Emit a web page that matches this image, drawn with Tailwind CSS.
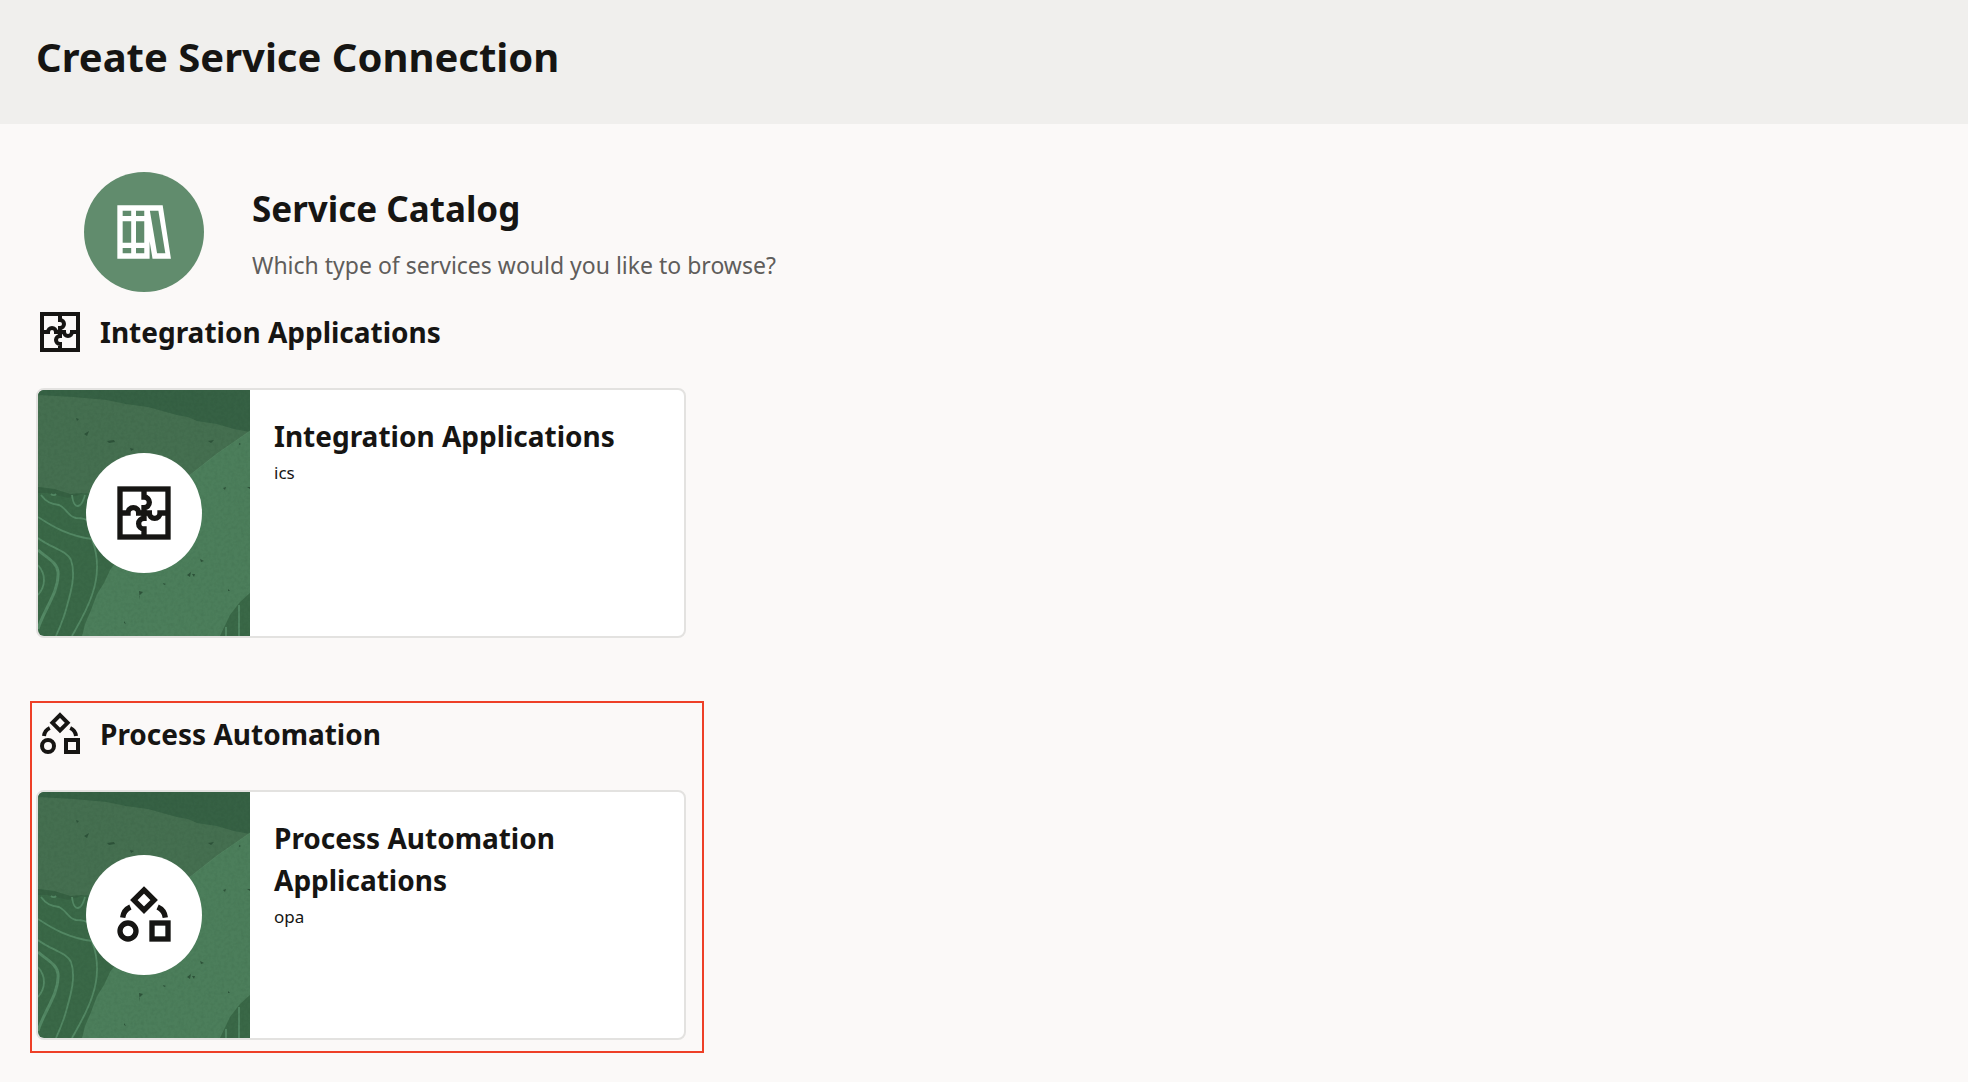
<!DOCTYPE html>
<html lang="en">
<head>
    <meta charset="UTF-8">
    <meta name="viewport" content="width=device-width, initial-scale=1.0">
    <title>Create Service Connection</title>
    <script src="https://cdn.jsdelivr.net/npm/@tailwindcss/browser@4"></script>
</head>
<body class="min-h-screen bg-[#fbf9f8] font-['Noto_Sans',sans-serif] text-[#161513]">
    <!-- Shared icons and card artwork -->
    <svg class="hidden" aria-hidden="true">
        <symbol id="icon-puzzle" viewBox="0 0 24 24">
            <g fill="none" stroke="currentColor" stroke-width="2">
                <rect x="3" y="3" width="18" height="18"/>
                <path d="M12 3V6A2 2 0 0 1 12 10V12M21 12H18A2 2 0 0 1 14 12H12M12 21V18A2 2 0 0 1 12 14V12M3 12H6A2 2 0 0 1 10 12H12"/>
                <path d="M11 12H13"/>
            </g>
        </symbol>
        <symbol id="icon-process" viewBox="0 0 24 24">
            <g fill="none" stroke="currentColor" stroke-width="2">
                <path d="M12 2.6L15.8 6.4L12 10.2L8.2 6.4Z"/>
                <circle cx="6" cy="18" r="3"/>
                <rect x="15" y="15" width="6" height="6"/>
                <path d="M4 13A5 5 0 0 1 6.9 9M20 13A5 5 0 0 0 17.1 9"/>
            </g>
        </symbol>
        <symbol id="icon-books" viewBox="0 0 24 24">
            <path fill="currentColor" fill-rule="evenodd" d="M2 2H19L22.1 22H15.2L14.1 15.5V22H2ZM4 4V6H7.2V4ZM9 4V6H12.1V4ZM4 8V16H7.2V8ZM9 8V16H12.1V8ZM4 18V20H7.2V18ZM9 18V20H12.1V18ZM14.2 4L16.9 20H20L17.4 4Z"/>
        </symbol>
        <filter id="grain" x="0" y="0" width="100%" height="100%">
            <feTurbulence type="fractalNoise" baseFrequency="0.3" numOctaves="2" seed="4"/>
            <feColorMatrix values="0 0 0 0 0.1  0 0 0 0 0.22  0 0 0 0 0.14  0.9 0 0 0 -0.38"/>
        </filter>
        <symbol id="card-art" viewBox="0 0 212 246" preserveAspectRatio="xMidYMid slice">
            <rect width="212" height="246" fill="#3a6847"/>
            <path fill="#366144" d="M0 0H212V50H0Z"/>
            <path fill="#456f50" d="M0 5L36 7L69 10L88 14L110 17L139 25L150 27L159 31L179 34L196 39L212 42V110H60L49 103L32 104L16 99L0 97Z"/>
            <path fill="#4c7e5b" d="M212 41L180 63L152 85L110 130L72 180L66 193L59 204L53 220L47 234L44 246H182L192 225L202 212L212 203Z"/>
            <path fill="none" stroke="#5c8d69" stroke-width="1" opacity=".5" d="M212 41L180 63L152 85"/>
            <path fill="#335c40" opacity=".6" d="M0 97L16 99L32 104L46 103L30 108L10 103L0 103Z"/>
            <g fill="none" stroke="#538864" stroke-width="1.8">
                <path d="M3 105C8 112 13 114 21 115C28 118 31 127 38 128C45 128 48 129 54 133"/>
                <path d="M0 127C15 137 31 146 54 149C61 168 60 188 54 205C49 220 43 230 34 246"/>
                <path d="M0 148C13 158 28 160 33 170C38 184 33 202 29 216C26 228 22 237 18 246"/>
                <path stroke-width="3" d="M0 160C9 168 19 172 20 182C21 195 14 208 9 218C5 226 2 232 0 239"/>
                <path d="M0 175C8 184 8 196 0 205"/>
                <path d="M34 105C35 114 38 118 42 115C45 113 46 108 47 105"/>
                <path d="M13 104C15 106 17 105 18 104M201 215V246M188 237V246"/>
            </g>
            <rect width="212" height="246" filter="url(#grain)" opacity=".2"/>
            <g fill="#2d5239">
                <path d="M46 44L51 41L49 46ZM69 51L76 50L77 52L71 53ZM170 51L176 50L173 53ZM38 28L41 29L39 31ZM92 58L96 59L93 61ZM162 169L166 171L163 172ZM149 185L153 182L152 187ZM154 184L157 184L156 187ZM101 201L105 202L101 206L102 210ZM185 98L188 97L187 100ZM209 97H212V99ZM125 193L128 194L126 195ZM86 231L88 234L86 233ZM190 199L192 201L190 201ZM201 53L203 54L201 55Z"/>
            </g>
        </symbol>
    </svg>

    <header class="bg-[#f0efed] px-9 pt-[33px] pb-[43px]">
        <h1 class="text-[40px] leading-[48px] font-bold">Create Service Connection</h1>
    </header>

    <main class="px-9 pt-12 pb-10">
        <!-- Catalog intro -->
        <div class="flex gap-12 pl-12">
            <div class="flex size-[120px] shrink-0 items-center justify-center rounded-full bg-[#618c6d] text-white">
                <svg class="size-16" aria-hidden="true"><use href="#icon-books"/></svg>
            </div>
            <div class="pt-[15px]">
                <h2 class="text-[35px] leading-11 font-bold">Service Catalog</h2>
                <p class="mt-[18px] text-[23px] leading-8 text-[#5f5d5b]">Which type of services would you like to browse?</p>
            </div>
        </div>

        <!-- Integration -->
        <section class="mt-4 w-full max-w-[650px]">
            <div class="flex items-center gap-4">
                <svg class="size-12 shrink-0" aria-hidden="true"><use href="#icon-puzzle"/></svg>
                <h2 class="text-[28px] leading-[42px] font-bold">Integration Applications</h2>
            </div>
            <a href="#ics" class="mt-8 flex min-h-[250px] overflow-hidden rounded-lg border-2 border-[#e3e2e0] bg-white">
                <div class="relative flex w-[212px] shrink-0 items-center justify-center">
                    <svg class="absolute inset-0 size-full" aria-hidden="true"><use href="#card-art"/></svg>
                    <div class="relative flex h-[120px] w-[116px] items-center justify-center rounded-[50%] bg-white">
                        <svg class="size-16" aria-hidden="true"><use href="#icon-puzzle"/></svg>
                    </div>
                </div>
                <div class="flex-1 px-6 pt-[25px]">
                    <h3 class="text-[28px] leading-[42px] font-bold">Integration Applications</h3>
                    <p class="mt-1 text-[17px] leading-6">ics</p>
                </div>
            </a>
        </section>

        <!-- Process automation, highlighted -->
        <section class="relative mt-[72px] w-full max-w-[650px]">
            <div class="pointer-events-none absolute -top-[9px] -right-[18px] -bottom-[13px] -left-1.5 border-2 border-[#ee4027]"></div>
            <div class="flex items-center gap-4">
                <svg class="size-12 shrink-0" aria-hidden="true"><use href="#icon-process"/></svg>
                <h2 class="text-[28px] leading-[42px] font-bold">Process Automation</h2>
            </div>
            <a href="#opa" class="mt-8 flex min-h-[250px] overflow-hidden rounded-lg border-2 border-[#e3e2e0] bg-white">
                <div class="relative flex w-[212px] shrink-0 items-center justify-center">
                    <svg class="absolute inset-0 size-full" aria-hidden="true"><use href="#card-art"/></svg>
                    <div class="relative flex h-[120px] w-[116px] items-center justify-center rounded-[50%] bg-white">
                        <svg class="size-16" aria-hidden="true"><use href="#icon-process"/></svg>
                    </div>
                </div>
                <div class="flex-1 px-6 pt-[25px]">
                    <h3 class="text-[28px] leading-[42px] font-bold">Process Automation Applications</h3>
                    <p class="mt-1 text-[17px] leading-6">opa</p>
                </div>
            </a>
        </section>
    </main>
</body>
</html>
